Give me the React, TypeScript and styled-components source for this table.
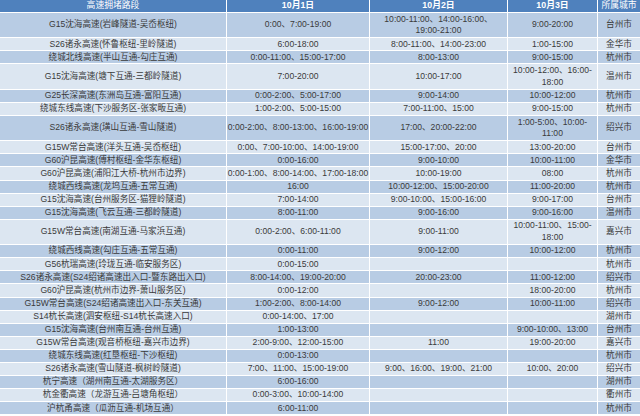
import React from 'react';
import styled, { createGlobalStyle } from 'styled-components';

const Global = createGlobalStyle`
  html, body { margin: 0; padding: 0; background: #ffffff; }
  body { font-family: "Liberation Sans", "Noto Sans CJK SC", sans-serif; }
`;

const COLS = '227px 143px 138px 90px 42px';
const SINGLE = 13.1;
const DOUBLE = 25.3;

type Band = 'head' | 'dark' | 'light';

const bandColor: Record<Band, string> = {
  head: '#4f81bd',
  dark: '#b8cce4',
  light: '#dce6f1',
};

const Table = styled.div`
  width: 640px;
  display: flex;
  flex-direction: column;
`;

const Row = styled.div<{ $h: number; $band: Band }>`
  display: grid;
  grid-template-columns: ${COLS};
  height: ${(p) => p.$h}px;
  background: ${(p) => bandColor[p.$band]};
`;

const Cell = styled.div`
  display: flex;
  align-items: center;
  justify-content: center;
  text-align: center;
  box-sizing: border-box;
  border-right: 1px solid #ffffff;
  border-bottom: 1px solid #ffffff;
  font-size: 8.6px;
  line-height: 11.5px;
  color: #3a3a3a;
  white-space: pre-line;
  overflow: hidden;
  &:last-child { border-right: none; }
`;

const HeadCell = styled(Cell)<{ $bold?: boolean }>`
  color: #ffffff;
  font-weight: ${(p) => (p.$bold ? 700 : 400)};
  font-size: 8.8px;
`;

type RowData = [string, string, string, string, string];

const rows: RowData[] = [
  ['G15沈海高速(岩峰隧道-吴岙枢纽)', '0:00、7:00-19:00', '10:00-11:00、14:00-16:00、\n19:00-21:00', '9:00-20:00', '台州市'],
  ['S26诸永高速(怀鲁枢纽-里岭隧道)', '6:00-18:00', '8:00-11:00、14:00-23:00', '1:00-15:00', '金华市'],
  ['绕城北线高速(半山互通-勾庄互通)', '0:00-11:00、15:00-17:00', '8:00-13:00', '9:00-15:00', '杭州市'],
  ['G15沈海高速(塘下互通-三都岭隧道)', '7:00-20:00', '10:00-17:00', '10:00-12:00、16:00-\n18:00', '温州市'],
  ['G25长深高速(东洲岛互通-富阳互通)', '0:00-2:00、5:00-17:00', '9:00-14:00', '10:00-12:00', '杭州市'],
  ['绕城东线高速(下沙服务区-张家畈互通)', '1:00-2:00、5:00-15:00', '7:00-11:00、15:00', '9:00-15:00', '杭州市'],
  ['S26诸永高速(璜山互通-雪山隧道)', '0:00-2:00、8:00-13:00、16:00-19:00', '17:00、20:00-22:00', '1:00-5:00、10:00-\n11:00', '绍兴市'],
  ['G15W常台高速(洋头互通-吴岙枢纽)', '0:00、7:00-10:00、14:00-19:00', '15:00-17:00、20:00', '13:00-20:00', '台州市'],
  ['G60沪昆高速(傅村枢纽-金华东枢纽)', '0:00-16:00', '9:00-10:00', '10:00-11:00', '金华市'],
  ['G60沪昆高速(浦阳江大桥-杭州市边界)', '0:00-1:00、8:00-14:00、17:00-18:00', '10:00-19:00', '08:00', '杭州市'],
  ['绕城西线高速(龙坞互通-五常互通)', '16:00', '10:00-12:00、15:00-20:00', '11:00-20:00', '杭州市'],
  ['G15沈海高速(台州服务区-猫狸岭隧道)', '7:00-14:00', '9:00-10:00、15:00-16:00', '9:00-17:00', '台州市'],
  ['G15沈海高速(飞云互通-三都岭隧道)', '8:00-11:00', '9:00-16:00', '9:00-16:00', '温州市'],
  ['G15W常台高速(南湖互通-马家浜互通)', '0:00-2:00、6:00-11:00', '9:00-11:00', '10:00-11:00、15:00-\n18:00', '嘉兴市'],
  ['绕城西线高速(勾庄互通-五常互通)', '0:00-11:00', '9:00-12:00', '10:00-12:00', '杭州市'],
  ['G56杭瑞高速(玲珑互通-临安服务区)', '0:00-15:00', '', '', '杭州市'],
  ['S26诸永高速(S24绍诸高速出入口-暨东路出入口)', '8:00-14:00、19:00-20:00', '20:00-23:00', '11:00-12:00', '绍兴市'],
  ['G60沪昆高速(杭州市边界-萧山服务区)', '0:00-12:00', '', '18:00-20:00', '杭州市'],
  ['G15W常台高速(S24绍诸高速出入口-东关互通)', '1:00-2:00、8:00-14:00', '9:00-12:00', '10:00-11:00', '绍兴市'],
  ['S14杭长高速(泗安枢纽-S14杭长高速入口)', '0:00-14:00、17:00', '', '', '湖州市'],
  ['G15沈海高速(台州南互通-台州互通)', '1:00-13:00', '', '9:00-10:00、13:00', '台州市'],
  ['G15W常台高速(观音桥枢纽-嘉兴市边界)', '2:00-9:00、12:00-15:00', '11:00', '19:00-20:00', '嘉兴市'],
  ['绕城东线高速(红垦枢纽-下沙枢纽)', '0:00-13:00', '', '', '杭州市'],
  ['S26诸永高速(雪山隧道-枫树岭隧道)', '7:00、11:00、15:00-19:00', '9:00、16:00、19:00、21:00', '10:00、20:00', '绍兴市'],
  ['杭宁高速（湖州南互通-太湖服务区）', '6:00-16:00', '', '', '湖州市'],
  ['杭金衢高速（龙游互通-吕塘角枢纽）', '0:00-3:00、10:00-14:00', '', '', '衢州市'],
  ['沪杭甬高速（瓜沥互通-机场互通）', '6:00-11:00', '', '', '杭州市'],
];

export default function App() {
  return (
    <>
      <Global />
      <Table>
        <Row $h={13} $band="head">
          <HeadCell>高速拥堵路段</HeadCell>
          <HeadCell $bold>10月1日</HeadCell>
          <HeadCell $bold>10月2日</HeadCell>
          <HeadCell $bold>10月3日</HeadCell>
          <HeadCell>所属城市</HeadCell>
        </Row>
        {rows.map((r, i) => {
          const tall = r.some((c) => c.includes('\n'));
          return (
            <Row key={i} $h={tall ? DOUBLE : SINGLE} $band={i % 2 === 0 ? 'dark' : 'light'}>
              {r.map((c, j) => (
                <Cell key={j}>{c}</Cell>
              ))}
            </Row>
          );
        })}
      </Table>
    </>
  );
}
